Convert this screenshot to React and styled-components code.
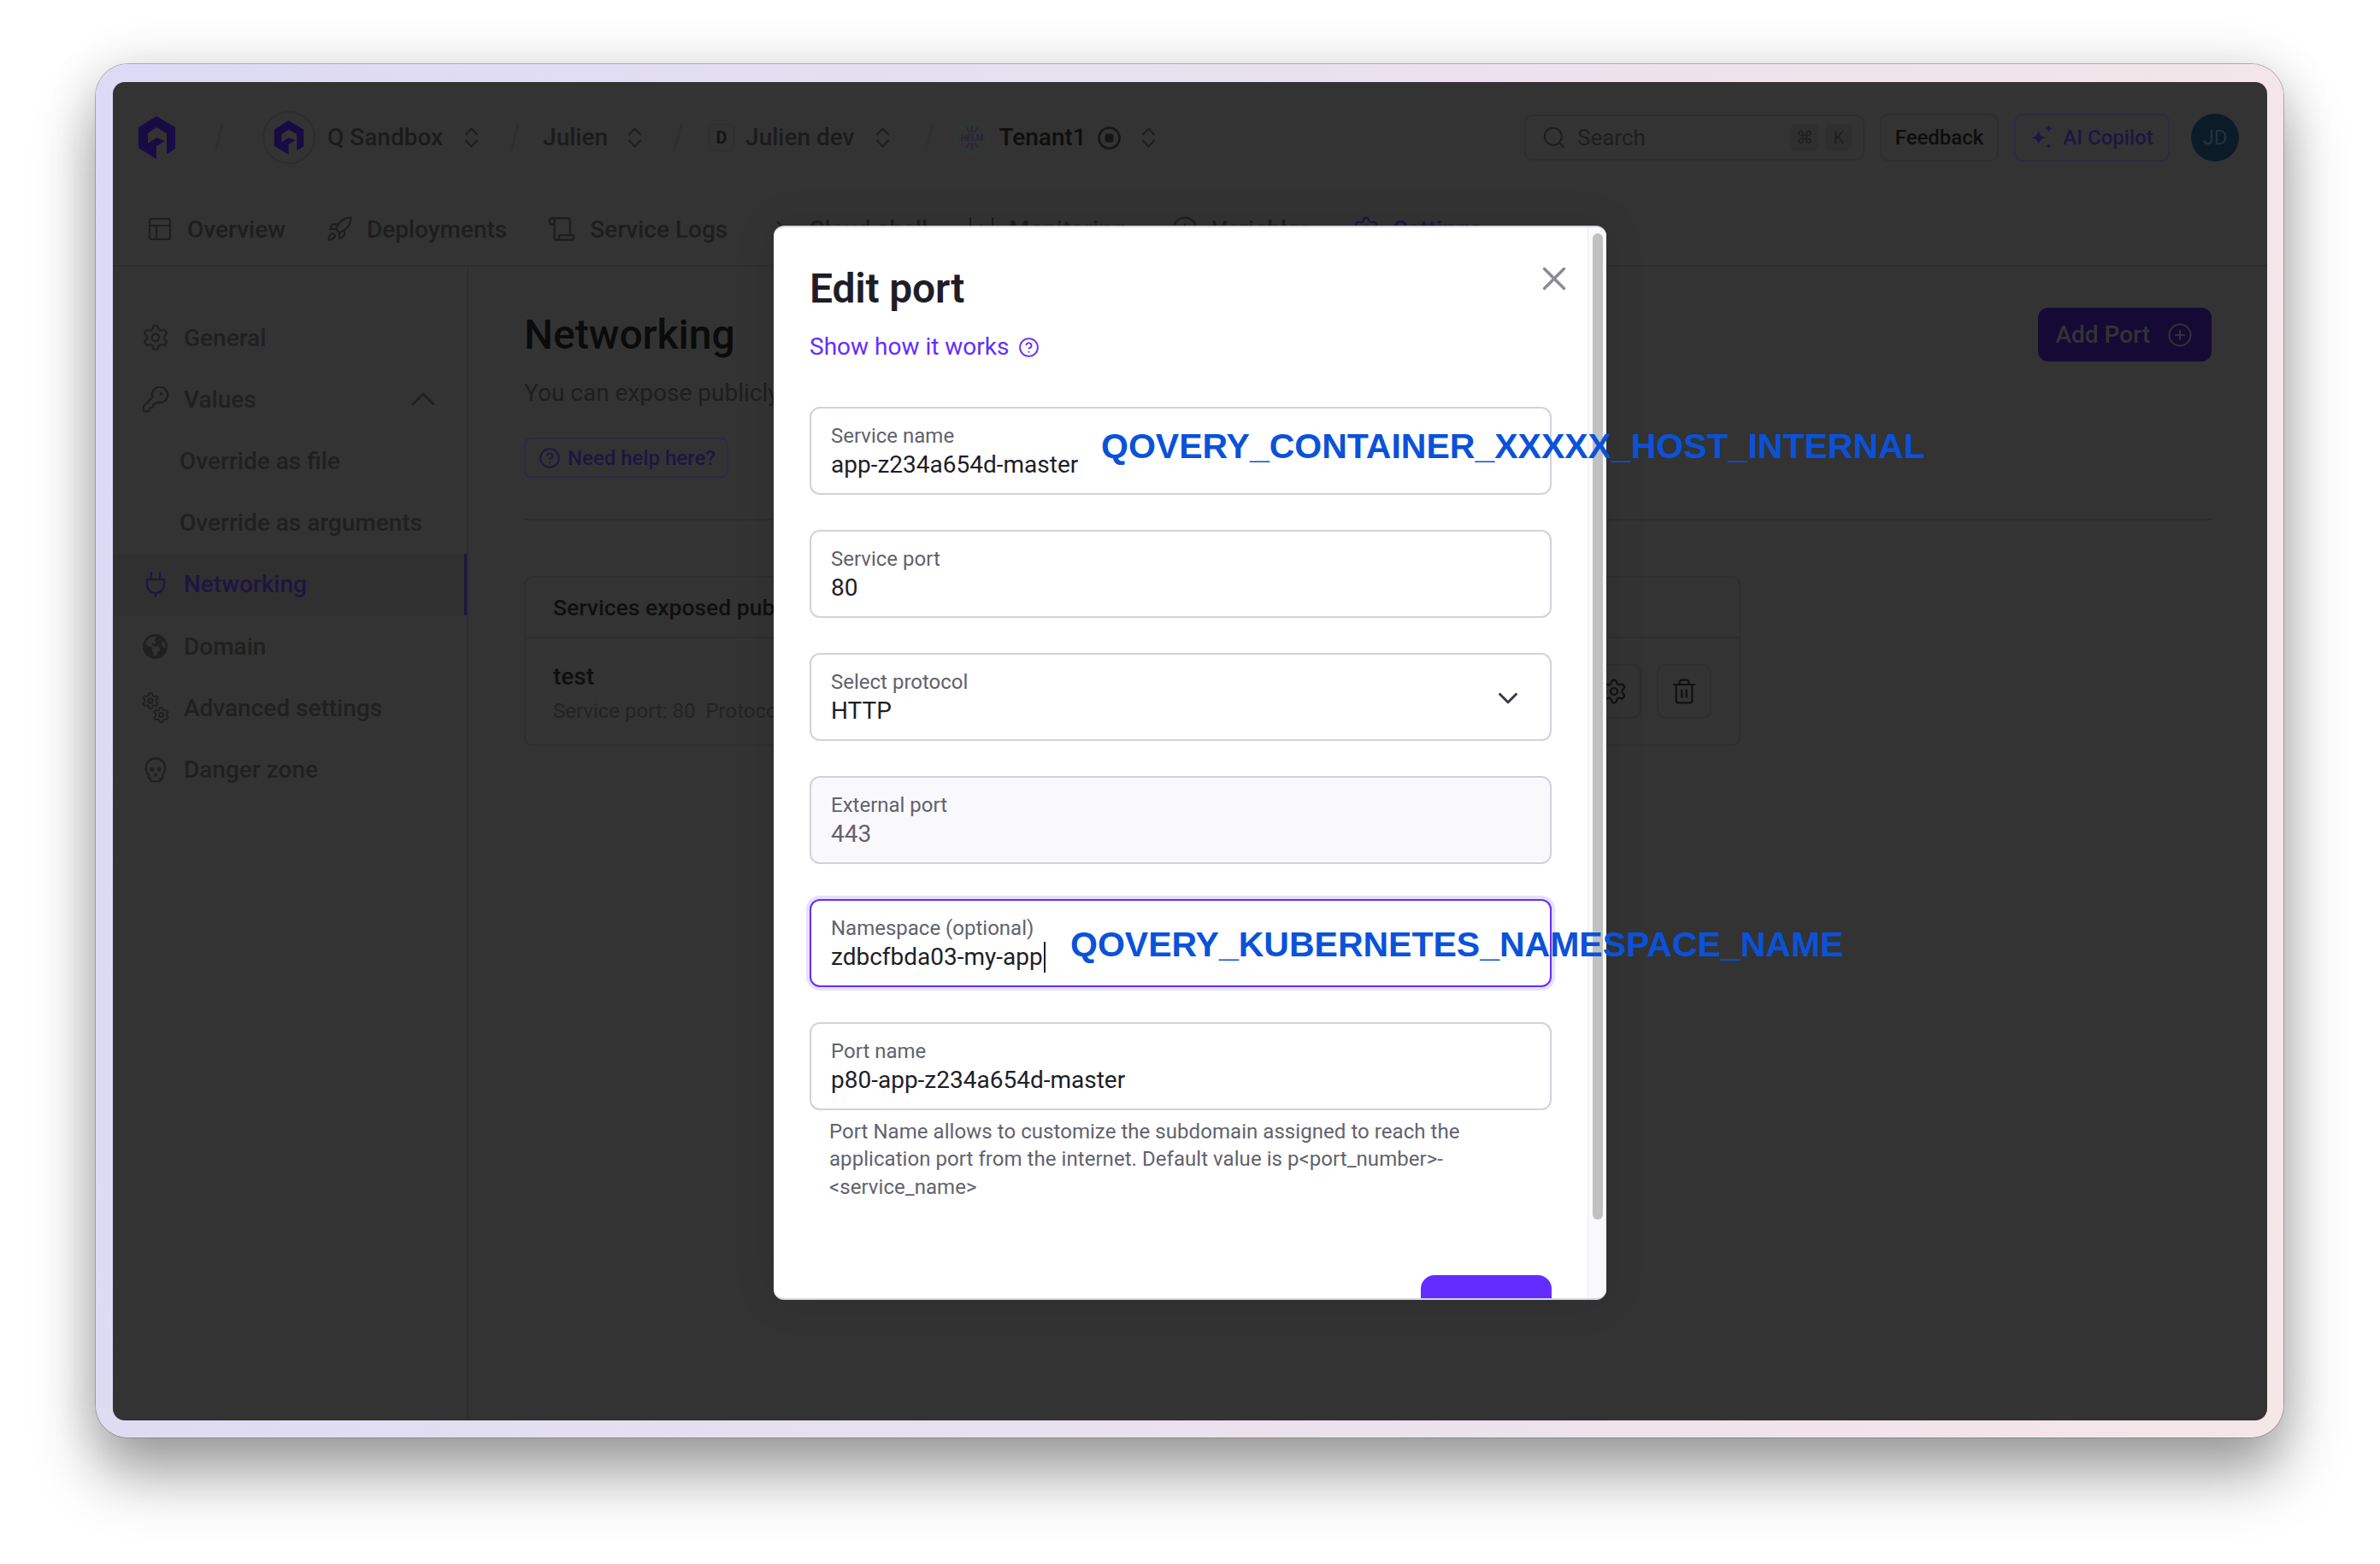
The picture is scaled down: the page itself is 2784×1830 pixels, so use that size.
import React from "react";
import styled, { createGlobalStyle } from "styled-components";
import {
  Settings, KeyRound, ChevronUp, ChevronDown, Skull, Rocket, PanelsTopLeft, Scroll, ChevronRight,
  CircleAlert, Search, X, CircleHelp, CirclePlus, Trash2,
} from "lucide-react";
import { FaEarthAmericas } from "react-icons/fa6";

const Global = createGlobalStyle`
  html, body { margin: 0; padding: 0; background: #fff; }
  * { box-sizing: border-box; }
  body { font-family: Roboto, "Liberation Sans", sans-serif; }
`;

const Page = styled.div`
  width: 2784px;
  height: 1830px;
  padding: 75px 113px 148px 112px;
  background: #fff;
`;
const Frame = styled.div`
  width: 100%;
  height: 100%;
  padding: 21px 19px 20px 20px;
  border-radius: 38px;
  background: linear-gradient(98deg, #dcdaf5 0%, #e6e0ef 40%, #f5e6e8 100%);
  box-shadow: 0 0 0 1px rgba(120, 120, 125, 0.55), 0 44px 70px rgba(0, 0, 0, 0.36), 0 0 60px rgba(0, 0, 0, 0.12);
`;
const Window = styled.div`
  position: relative;
  display: flex;
  flex-direction: column;
  height: 100%;
  border-radius: 14px;
  background: #333;
  color: #1c1c1c;
  overflow: hidden;
`;
const Header = styled.header`
  display: flex;
  align-items: center;
  flex: none;
  height: 130px;
  padding: 0 33px 0 30px;
  font-size: 28px;
  font-weight: 500;
`;
const Logo = styled.svg`
  flex: none;
  width: ${(p) => p.$w}px;
  height: ${(p) => p.$h}px;
  fill: #160c43;
`;
const Slash = styled.span`
  flex: none;
  width: 2px;
  height: 32px;
  margin: 0 ${(p) => p.$after}px 0 ${(p) => p.$before}px;
  background: #2e2e2e;
  transform: skewX(-14deg);
`;
const OrgBadge = styled.span`
  display: flex;
  align-items: center;
  justify-content: center;
  width: 62px;
  height: 62px;
  margin-right: 14px;
  border: 2px solid #2d2d2d;
  border-radius: 50%;
`;
const CrumbText = styled.span`
  color: ${(p) => (p.$strong ? "#0f0f0f" : "#1b1b1b")};
  margin-right: ${(p) => p.$gap}px;
  line-height: 36px;
`;
const UpDown = styled.svg`
  flex: none;
  width: 19px;
  height: 24px;
  fill: none;
  stroke: #1e1e1e;
  stroke-width: 2;
`;
const EnvBadge = styled.span`
  display: flex;
  align-items: center;
  justify-content: center;
  width: 30px;
  height: 32px;
  margin-right: 13px;
  border: 1px solid #2d2d2d;
  border-radius: 8px;
  font-size: 20px;
  font-weight: 700;
  color: #141414;
`;
const HelmIcon = styled.svg`
  flex: none;
  width: 38px;
  height: 38px;
  margin-right: 13px;
`;
const StatusIcon = styled.svg`
  flex: none;
  width: 27px;
  height: 27px;
  margin: 0 23px 0 13px;
  fill: none;
  stroke: #161616;
  stroke-width: 2.6;
`;
const Tools = styled.div`
  display: flex;
  align-items: center;
  margin-left: auto;
`;
const SearchBox = styled.div`
  display: flex;
  align-items: center;
  width: 398px;
  height: 54px;
  padding: 0 12px 0 18px;
  margin-right: 18px;
  border: 2px solid #2e2e2e;
  border-radius: 10px;
  color: #1e1e1e;
  font-size: 26px;
  font-weight: 400;
`;
const SearchLabel = styled.span`
  margin-left: 12px;
`;
const Keys = styled.span`
  display: flex;
  gap: 8px;
  margin-left: auto;
`;
const Key = styled.kbd`
  display: flex;
  align-items: center;
  justify-content: center;
  width: 32px;
  height: 32px;
  border-radius: 6px;
  background: #2f2f2f;
  font-family: Roboto, sans-serif;
  font-size: 20px;
  color: #1e1e1e;
`;
const ToolButton = styled.button`
  display: flex;
  align-items: center;
  justify-content: center;
  gap: 10px;
  width: ${(p) => p.$w}px;
  height: 56px;
  padding: 0;
  margin-right: ${(p) => p.$mr}px;
  border: 2px solid ${(p) => (p.$accent ? "#2d2b3f" : "#2e2e2e")};
  border-radius: 10px;
  background: transparent;
  color: ${(p) => (p.$accent ? "#1d1543" : "#0d0d0d")};
  font: 500 24px Roboto, sans-serif;
`;
const Sparkle = styled.svg`
  width: 28px;
  height: 30px;
  fill: #1d1543;
`;
const Avatar = styled.span`
  display: flex;
  align-items: center;
  justify-content: center;
  width: 56px;
  height: 56px;
  border-radius: 50%;
  background: #0b1c28;
  color: #24333f;
  font-size: 24px;
  font-weight: 400;
`;
const Tabs = styled.nav`
  display: flex;
  align-items: center;
  flex: none;
  gap: 47px;
  height: 86px;
  padding-left: 39px;
  border-bottom: 2px solid #2d2d2d;
  font-size: 28px;
  font-weight: 500;
`;
const Tab = styled.span`
  display: flex;
  align-items: center;
  gap: 16px;
  margin-left: ${(p) => p.$push || 0}px;
  white-space: nowrap;
  color: ${(p) => (p.$active ? "#1d1543" : "#1e1e1e")};
`;
const Body = styled.div`
  display: flex;
  flex: 1;
  min-height: 0;
`;
const Sidebar = styled.aside`
  flex: none;
  width: 416px;
  padding-top: 47px;
  border-right: 2px solid #2d2d2d;
`;
const NavRow = styled.div`
  position: relative;
  display: flex;
  align-items: center;
  gap: 16px;
  height: 72.2px;
  padding: 0 27px 0 ${(p) => (p.$child ? 78 : 32)}px;
  font-size: 28px;
  font-weight: 500;
  color: ${(p) => (p.$active ? "#1d1543" : "#202020")};
  background: ${(p) => (p.$active ? "#303030" : "transparent")};
  box-shadow: ${(p) => (p.$active ? "inset -3px 0 0 #1d1543" : "none")};
`;
const NavIcon = styled.span`
  display: flex;
  align-items: center;
  justify-content: center;
  width: 35px;
`;
const NavEnd = styled.span`
  display: flex;
  margin-left: auto;
`;
const PlugGlyph = styled.svg`
  width: 26px;
  height: 30px;
  fill: none;
  stroke: currentColor;
  stroke-width: 2.2;
`;
const Main = styled.main`
  flex: 1;
  min-width: 0;
  padding: 48px 65px 0;
`;
const MainHead = styled.section`
  display: flex;
  justify-content: space-between;
  align-items: flex-start;
  padding-bottom: 48px;
  border-bottom: 2px solid #2d2d2d;
`;
const Title = styled.h1`
  margin: 0;
  font-size: 48px;
  line-height: 64px;
  font-weight: 500;
  color: #0b0b0b;
`;
const Subtitle = styled.p`
  margin: 16px 0 0;
  font-size: 28px;
  line-height: 40px;
  color: #1e1e1e;
`;
const HelpButton = styled.span`
  display: inline-flex;
  align-items: center;
  gap: 8px;
  height: 47px;
  margin-top: 32px;
  padding: 0 13px 0 15px;
  border: 2px solid #2d2b3f;
  border-radius: 8px;
  color: #1d1543;
  font-size: 24px;
  font-weight: 500;
`;
const AddButton = styled.span`
  display: flex;
  align-items: center;
  gap: 20px;
  height: 63px;
  padding: 0 22px 0 20px;
  border-radius: 12px;
  background: #150a36;
  color: #333;
  font-size: 28px;
  font-weight: 500;
`;
const Card = styled.section`
  width: 1423px;
  margin-top: 65px;
  border: 2px solid #2e2e2e;
  border-radius: 10px;
`;
const CardHead = styled.div`
  display: flex;
  align-items: center;
  height: 71px;
  padding-left: 32px;
  border-bottom: 2px solid #2e2e2e;
  font-size: 26.5px;
  font-weight: 500;
  color: #0f0f0f;
`;
const CardRow = styled.div`
  display: flex;
  align-items: center;
  justify-content: space-between;
  height: 124px;
  padding: 0 32px;
`;
const PortInfo = styled.div`
  padding-top: 4px;
`;
const PortName = styled.div`
  font-size: 28px;
  line-height: 36px;
  font-weight: 500;
  color: #0f0f0f;
`;
const PortMeta = styled.div`
  margin-top: 6px;
  font-size: 24px;
  line-height: 32px;
  color: #232323;
`;
const CardActions = styled.div`
  display: flex;
  gap: 18px;
`;
const IconButton = styled.span`
  display: flex;
  align-items: center;
  justify-content: center;
  width: 64px;
  height: 64px;
  border: 2px solid #2e2e2e;
  border-radius: 10px;
  color: #101010;
`;
const Modal = styled.div`
  position: absolute;
  z-index: 2;
  left: 773px;
  top: 168px;
  display: flex;
  width: 974px;
  height: 1257px;
  border-top: 2px solid #d6d6df;
  border-bottom: 2px solid #d6d6df;
  border-radius: 12px;
  background: #fff;
  overflow: hidden;
  box-shadow: 0 0 50px rgba(0, 0, 0, 0.1);
`;
const ModalScroll = styled.div`
  position: relative;
  flex: 1;
  min-width: 0;
  padding: 40px 42px 0;
  overflow: hidden;
`;
const ModalTitle = styled.h2`
  margin: 0;
  font-size: 48px;
  line-height: 64px;
  font-weight: 600;
  letter-spacing: -0.2px;
  color: #1e1e28;
`;
const HowLink = styled.a`
  display: flex;
  align-items: center;
  gap: 11px;
  margin-top: 16px;
  font-size: 28px;
  line-height: 40px;
  color: #642dff;
`;
const Close = styled.span`
  position: absolute;
  top: 37px;
  right: 16px;
  display: flex;
  color: #8a8a95;
`;
const Fields = styled.div`
  display: flex;
  flex-direction: column;
  gap: 41px;
  margin-top: 50px;
`;
const Field = styled.div`
  position: relative;
  display: flex;
  flex-direction: column;
  height: 103px;
  padding: 16px 23px;
  border: 2px solid ${(p) => (p.$focus ? "#642dff" : "#d2d2da")};
  border-radius: 12px;
  background: ${(p) => (p.$disabled ? "#f9f9fb" : "#fff")};
  box-shadow: ${(p) => (p.$focus ? "0 0 0 4px #e6e1ff" : "none")};
`;
const FieldLabel = styled.span`
  font-size: 24px;
  line-height: 32px;
  color: #62626e;
`;
const FieldValue = styled.span`
  display: flex;
  align-items: center;
  font-size: 28px;
  line-height: 36px;
  color: ${(p) => (p.$disabled ? "#62626e" : "#1e1e28")};
`;
const Caret = styled.i`
  width: 2px;
  height: 36px;
  margin-left: 1px;
  background: #1e1e28;
`;
const SelectArrow = styled.span`
  position: absolute;
  right: 30px;
  top: 32px;
  display: flex;
  color: #3a3a46;
`;
const Hint = styled.p`
  margin: 9px 0 0;
  padding-left: 23px;
  font-size: 24px;
  line-height: 32.4px;
  letter-spacing: 0.05px;
  color: #62626e;
`;
const Actions = styled.div`
  display: flex;
  justify-content: flex-end;
  margin-top: 87px;
`;
const Confirm = styled.span`
  display: block;
  width: 153px;
  height: 96px;
  border-radius: 16px;
  background: #642dff;
`;
const Track = styled.div`
  flex: none;
  width: 22px;
  padding: 7px 4px 0 5px;
  border-left: 1px solid #ececf0;
  background: #fafafc;
`;
const Thumb = styled.div`
  height: 1154px;
  border-radius: 7px;
  background: #c1c1c1;
`;
const Annotation = styled.span`
  position: absolute;
  z-index: 3;
  left: ${(p) => p.$x}px;
  top: ${(p) => p.$y}px;
  font-family: "Liberation Sans", Arial, sans-serif;
  font-weight: 700;
  font-size: 41px;
  line-height: 50px;
  white-space: nowrap;
  color: #0a52d9;
`;

const ChevronsV = () => (
  <UpDown viewBox="0 0 19 24">
    <path d="M2.5 9 9.5 1.5l7 7.5M2.5 15l7 7.5 7-7.5" />
  </UpDown>
);
const QoveryMark = ({ w, h }) => (
  <Logo viewBox="12 10 43 50" $w={w} $h={h}>
    <polygon points="33,10 55,23 55,48 45,54 45,30 33,23 23,30 23,42 33,35 43,39 33,45 33,60 12,47 12,23" />
  </Logo>
);
const Helm = () => (
  <HelmIcon viewBox="0 0 38 38">
    <circle cx="19" cy="19" r="18" fill="none" stroke="#2e3837" strokeWidth="2" />
    <g stroke="#262338" strokeWidth="1.4" fill="none">
      <path d="M19 5v8M12 7l4 6M26 7l-4 6M19 33v-8M12 31l4-6M26 31l-4-6" />
    </g>
    <text x="19" y="22.5" textAnchor="middle" fontSize="10" fontWeight="700" fill="#262338" fontFamily="Roboto, sans-serif">HELM</text>
  </HelmIcon>
);
const Status = () => (
  <StatusIcon viewBox="0 0 27 27">
    <circle cx="13.5" cy="13.5" r="12" />
    <rect x="8.5" y="8.500" width="10" height="10" rx="2" fill="#161616" stroke="none" />
  </StatusIcon>
);
const TwoGears = () => (
  <svg width="34" height="38" viewBox="0 0 34 38">
    <Settings x="0" y="0" width="22" height="22" strokeWidth="2" />
    <Settings x="13" y="17" width="21" height="21" strokeWidth="2" />
  </svg>
);
const PlugIcon = () => (
  <PlugGlyph viewBox="0 0 26 30">
    <path d="M8 0v9M18 0v9M3 9h20v6a10 10 0 0 1-20 0ZM13 25v5" />
  </PlugGlyph>
);
const Bars = () => (
  <svg width="32" height="28" viewBox="0 0 32 28" fill="none" stroke="currentColor" strokeWidth="2">
    <path d="M3 0v28M29 0v28M9 14h14M16 8v12" />
  </svg>
);

const fields = [
  { label: "Service name", value: "app-z234a654d-master" },
  { label: "Service port", value: "80" },
  { label: "Select protocol", value: "HTTP", select: true },
  { label: "External port", value: "443", disabled: true },
  { label: "Namespace (optional)", value: "zdbcfbda03-my-app", focus: true },
  { label: "Port name", value: "p80-app-z234a654d-master" },
];

const nav = [
  { label: "General", icon: <Settings size={34} strokeWidth={1.6} /> },
  { label: "Values", icon: <KeyRound size={34} strokeWidth={1.6} />, end: <ChevronUp size={48} strokeWidth={1.3} /> },
  { label: "Override as file", child: true },
  { label: "Override as arguments", child: true },
  { label: "Networking", icon: <PlugIcon />, active: true },
  { label: "Domain", icon: <FaEarthAmericas size={29} /> },
  { label: "Advanced settings", icon: <TwoGears /> },
  { label: "Danger zone", icon: <Skull size={34} strokeWidth={1.6} /> },
];

export default function App() {
  return (
    <Page>
      <Global />
      <Frame>
        <Window>
          <Header>
            <QoveryMark w={43} h={50} />
            <Slash $before={50} $after={50} />
            <OrgBadge><QoveryMark w={36} h={40} /></OrgBadge>
            <CrumbText $gap={24}>Q Sandbox</CrumbText>
            <ChevronsV />
            <Slash $before={40} $after={32} />
            <CrumbText $gap={22}>Julien</CrumbText>
            <ChevronsV />
            <Slash $before={40} $after={35} />
            <EnvBadge>D</EnvBadge>
            <CrumbText $gap={23}>Julien dev</CrumbText>
            <ChevronsV />
            <Slash $before={44} $after={30} />
            <Helm />
            <CrumbText $gap={0} $strong>Tenant1</CrumbText>
            <Status />
            <ChevronsV />
            <Tools>
              <SearchBox>
                <Search size={30} strokeWidth={1.6} />
                <SearchLabel>Search</SearchLabel>
                <Keys><Key>⌘</Key><Key>K</Key></Keys>
              </SearchBox>
              <ToolButton $w={139} $mr={18}>Feedback</ToolButton>
              <ToolButton $w={182} $accent $mr={25}>
                <Sparkle viewBox="0 0 26 28">
                  <path d="M9 6c1 5 3 7 8 8-5 1-7 3-8 8-1-5-3-7-8-8 5-1 7-3 8-8ZM20 0c.5 2.5 1.500 3.500 4 4-2.500.5-3.500 1.500-4 4-.5-2.500-1.500-3.500-4-4 2.500-.5 3.500-1.500 4-4ZM20 20c.4 2 1.100 2.600 3 3-1.900.4-2.600 1-3 3-.4-2-1.100-2.600-3-3 1.900-.4 2.600-1 3-3Z" />
                </Sparkle>
                AI Copilot
              </ToolButton>
              <Avatar>JD</Avatar>
            </Tools>
          </Header>
          <Tabs>
            <Tab><PanelsTopLeft size={32} strokeWidth={1.6} />Overview</Tab>
            <Tab><Rocket size={32} strokeWidth={1.6} />Deployments</Tab>
            <Tab><Scroll size={34} strokeWidth={1.6} />Service Logs</Tab>
            <Tab><ChevronRight size={32} strokeWidth={1.7} />Cloud shell</Tab>
            <Tab><Bars />Monitoring</Tab>
            <Tab $push={6}><CircleAlert size={32} strokeWidth={1.6} />Variables</Tab>
            <Tab $active><Settings size={32} strokeWidth={1.6} />Settings</Tab>
          </Tabs>
          <Body>
            <Sidebar>
              {nav.map((item) => (
                <NavRow key={item.label} $child={item.child} $active={item.active}>
                  {item.icon && <NavIcon>{item.icon}</NavIcon>}
                  {item.label}
                  {item.end && <NavEnd>{item.end}</NavEnd>}
                </NavRow>
              ))}
            </Sidebar>
            <Main>
              <MainHead>
                <div>
                  <Title>Networking</Title>
                  <Subtitle>You can expose publicly your service ports</Subtitle>
                  <HelpButton><CircleHelp size={26} strokeWidth={1.7} />Need help here?</HelpButton>
                </div>
                <AddButton>Add Port<CirclePlus size={30} strokeWidth={1.6} /></AddButton>
              </MainHead>
              <Card>
                <CardHead>Services exposed publicly</CardHead>
                <CardRow>
                  <PortInfo>
                    <PortName>test</PortName>
                    <PortMeta>Service port: 80 &nbsp;Protocol: HTTP</PortMeta>
                  </PortInfo>
                  <CardActions>
                    <IconButton><Settings size={32} strokeWidth={1.6} /></IconButton>
                    <IconButton><Trash2 size={32} strokeWidth={1.6} /></IconButton>
                  </CardActions>
                </CardRow>
              </Card>
            </Main>
          </Body>
          <Modal>
            <ModalScroll>
              <ModalTitle>Edit port</ModalTitle>
              <HowLink>Show how it works <CircleHelp size={25} strokeWidth={1.8} /></HowLink>
              <Close><X size={46} strokeWidth={1.8} /></Close>
              <Fields>
                {fields.map((f) => (
                  <Field key={f.label} $focus={f.focus} $disabled={f.disabled}>
                    <FieldLabel>{f.label}</FieldLabel>
                    <FieldValue $disabled={f.disabled}>
                      {f.value}
                      {f.focus && <Caret />}
                    </FieldValue>
                    {f.select && <SelectArrow><ChevronDown size={38} strokeWidth={1.9} /></SelectArrow>}
                  </Field>
                ))}
              </Fields>
              <Hint>
                Port Name allows to customize the subdomain assigned to reach the application port from the internet. Default value is p&lt;port_number&gt;-&lt;service_name&gt;
              </Hint>
              <Actions><Confirm /></Actions>
            </ModalScroll>
            <Track><Thumb /></Track>
          </Modal>
          <Annotation $x={1156} $y={401}>QOVERY_CONTAINER_XXXXX_HOST_INTERNAL</Annotation>
          <Annotation $x={1120} $y={984}>QOVERY_KUBERNETES_NAMESPACE_NAME</Annotation>
        </Window>
      </Frame>
    </Page>
  );
}
